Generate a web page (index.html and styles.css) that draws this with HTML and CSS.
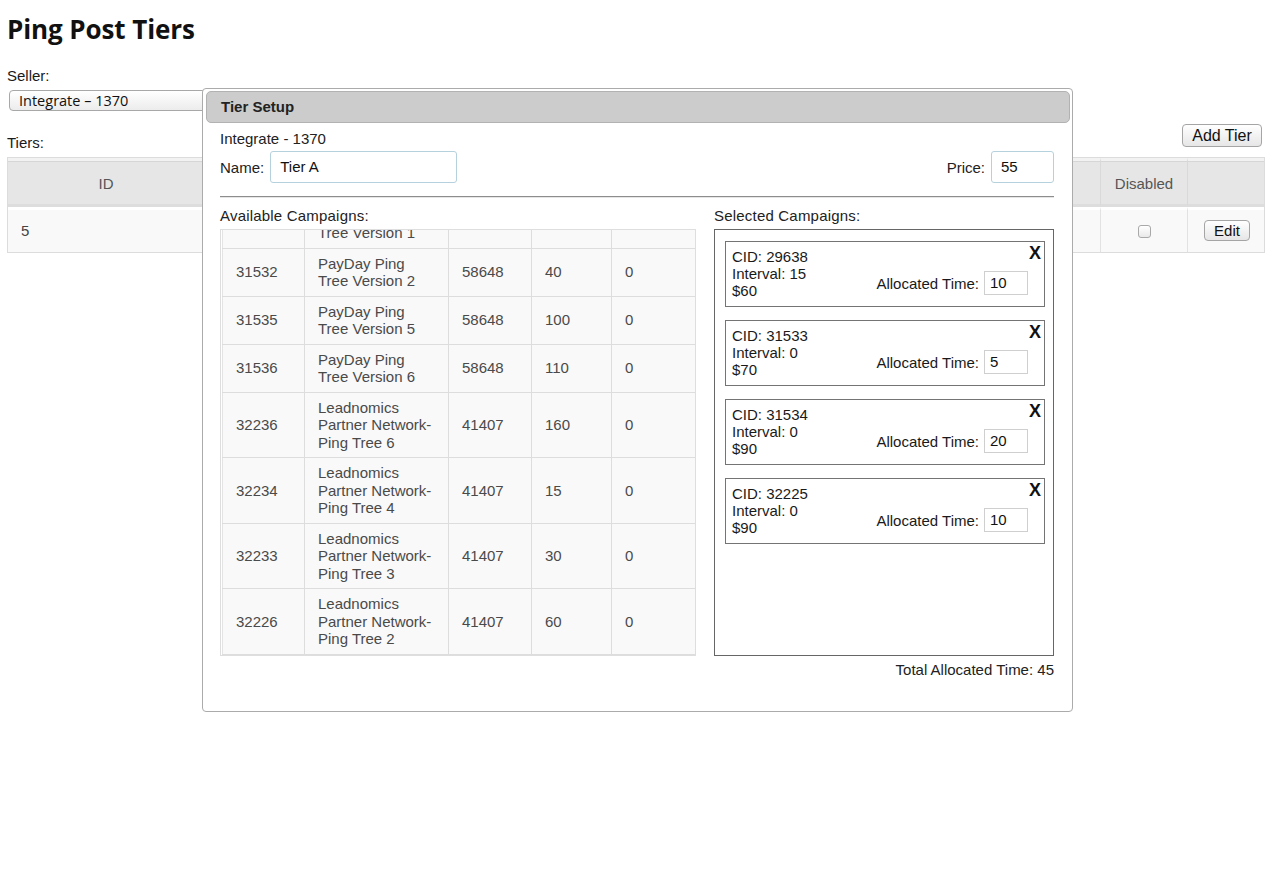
FILE: index.html
```html
<!DOCTYPE html>
<html>
<head>
<meta charset="utf-8">
<title>Ping Post Tiers</title>
<link rel="stylesheet" href="styles.css">
</head>
<body>
<div class="page">
  <h1 class="title">Ping Post Tiers</h1>
  <div class="field-label">Seller:</div>
  <div class="select">Integrate – 1370</div>
  <div class="tiers-head">
    <span class="tiers-label">Tiers:</span>
    <button class="mac-btn add-btn">Add Tier</button>
  </div>
  <table class="tiers">
    <thead>
      <tr>
        <th class="c-id">ID</th>
        <th class="c-name">Name</th>
        <th class="c-price">Price</th>
        <th class="c-dis">Disabled</th>
        <th class="c-act"></th>
      </tr>
    </thead>
    <tbody>
      <tr>
        <td class="c-id">5</td>
        <td>Tier A</td>
        <td>55</td>
        <td class="center"><span class="checkbox"></span></td>
        <td class="center"><button class="mac-btn edit-btn">Edit</button></td>
      </tr>
    </tbody>
  </table>
</div>

<div class="dialog">
  <div class="dialog-title">Tier Setup</div>
  <div class="dialog-body">
    <div class="seller-line">Integrate - 1370</div>
    <div class="name-row">
      <label class="inline-field">Name: <span class="text-input name-input">Tier A</span></label>
      <label class="inline-field">Price: <span class="text-input price-input">55</span></label>
    </div>
    <div class="divider"></div>
    <div class="columns">
      <div class="col-left">
        <div class="col-label">Available Campaigns:</div>
        <div class="avail-wrap">
          <table class="avail">
            <colgroup><col class="w1"><col class="w2"><col class="w3"><col class="w4"><col></colgroup>
            <tbody>
              <tr class="partial"><td></td><td class="nm">Tree Version 1</td><td></td><td></td><td></td></tr>
              <tr><td>31532</td><td class="nm">PayDay Ping<br>Tree Version 2</td><td>58648</td><td>40</td><td>0</td></tr>
              <tr><td>31535</td><td class="nm">PayDay Ping<br>Tree Version 5</td><td>58648</td><td>100</td><td>0</td></tr>
              <tr><td>31536</td><td class="nm">PayDay Ping<br>Tree Version 6</td><td>58648</td><td>110</td><td>0</td></tr>
              <tr><td>32236</td><td class="nm">Leadnomics<br>Partner Network-<br>Ping Tree 6</td><td>41407</td><td>160</td><td>0</td></tr>
              <tr><td>32234</td><td class="nm">Leadnomics<br>Partner Network-<br>Ping Tree 4</td><td>41407</td><td>15</td><td>0</td></tr>
              <tr><td>32233</td><td class="nm">Leadnomics<br>Partner Network-<br>Ping Tree 3</td><td>41407</td><td>30</td><td>0</td></tr>
              <tr><td>32226</td><td class="nm">Leadnomics<br>Partner Network-<br>Ping Tree 2</td><td>41407</td><td>60</td><td>0</td></tr>
            </tbody>
          </table>
        </div>
      </div>
      <div class="col-right">
        <div class="col-label">Selected Campaigns:</div>
        <div class="selected-box">
          <div class="card">
            <div class="card-info">CID: 29638<br>Interval: 15<br>$60</div>
            <div class="alloc">Allocated Time: <span class="small-input">10</span></div>
            <span class="close-x">X</span>
          </div>
          <div class="card">
            <div class="card-info">CID: 31533<br>Interval: 0<br>$70</div>
            <div class="alloc">Allocated Time: <span class="small-input">5</span></div>
            <span class="close-x">X</span>
          </div>
          <div class="card">
            <div class="card-info">CID: 31534<br>Interval: 0<br>$90</div>
            <div class="alloc">Allocated Time: <span class="small-input">20</span></div>
            <span class="close-x">X</span>
          </div>
          <div class="card">
            <div class="card-info">CID: 32225<br>Interval: 0<br>$90</div>
            <div class="alloc">Allocated Time: <span class="small-input">10</span></div>
            <span class="close-x">X</span>
          </div>
        </div>
        <div class="total">Total Allocated Time: 45</div>
      </div>
    </div>
  </div>
</div>
</body>
</html>
```

FILE: styles.css
```css
* { box-sizing: border-box; }

body {
  margin: 0;
  background: #fff;
  color: #1a1a1a;
  font-family: "Liberation Sans", Arial, Helvetica, sans-serif;
  font-size: 15px;
  line-height: 17px;
}

.page {
  padding: 0 15px 0 7px;
}

.title {
  margin: 0;
  padding-top: 12px;
  font-family: "Open Sans", "Noto Sans", sans-serif;
  font-weight: 700;
  font-size: 26px;
  line-height: 34px;
  letter-spacing: -0.1px;
  color: #111;
}

.field-label {
  margin-top: 21px;
}

.select {
  margin: 6px 0 0 2px;
  width: 200px;
  height: 21px;
  border: 1px solid #a8a8a8;
  border-radius: 4px;
  background: linear-gradient(#ffffff, #ececec);
  font-family: "Open Sans", "Noto Sans", sans-serif;
  font-size: 14.5px;
  line-height: 19px;
  padding-left: 9px;
  color: #111;
}

.tiers-head {
  display: flex;
  justify-content: space-between;
  align-items: flex-end;
  margin-top: 13px;
}

.tiers-label {
  margin-bottom: -4px;
}

.mac-btn {
  font-family: "Liberation Sans", Arial, sans-serif;
  color: #111;
  border: 1px solid #a5a5a5;
  border-radius: 4px;
  background: linear-gradient(#ffffff, #e6e6e6);
  padding: 0;
  cursor: pointer;
}

.add-btn {
  width: 80px;
  height: 23px;
  font-size: 16px;
  margin-right: 3px;
}

.tiers {
  margin-top: 10px;
  width: 1258px;
  border: 1px solid #dcdcdc;
  border-spacing: 0;
}

.tiers th {
  background: #e6e6e6;
  border-top: 3px solid #f2f2f2;
  box-shadow: inset 0 1px 0 #d6d6d6;
  border-bottom: 3px solid #dddddd;
  height: 49px;
  font-weight: 400;
  color: #555;
  text-align: center;
  border-left: 1px solid #d9d9d9;
  padding: 2px 0 0;
}

.tiers th:first-child,
.tiers td:first-child { border-left: none; }

.tiers td {
  background: #f9f9f9;
  border-top: 3px solid #fff;
  height: 45px;
  color: #444;
  border-left: 1px solid #e2e2e2;
  padding: 0 13px 2px;
}

.tiers .c-id { width: 196px; }
.tiers .c-dis { width: 87px; }
.tiers .c-act { width: 77px; }
.tiers .center { text-align: center; padding: 0 0 2px; }

.checkbox {
  display: inline-block;
  width: 13px;
  height: 13px;
  border: 1px solid #a9a9a9;
  border-radius: 3px;
  background: linear-gradient(#fff, #e9e9e9);
  vertical-align: middle;
}

.edit-btn {
  width: 46px;
  height: 21px;
  font-size: 15px;
  vertical-align: middle;
  margin-left: 2px;
}

/* Dialog overlay */
.dialog {
  position: absolute;
  left: 202px;
  top: 88px;
  width: 871px;
  height: 624px;
  background: #fff;
  border: 1px solid #ababab;
  border-radius: 4px;
  padding: 2px 2px 0 3px;
}

.dialog-title {
  height: 32px;
  background: #cccccc;
  border: 1px solid #b2b2b2;
  border-radius: 5px;
  font-weight: 700;
  font-size: 15px;
  line-height: 30px;
  padding-left: 14px;
  color: #222;
}

.dialog-body {
  padding: 0 16px 0 14px;
}

.seller-line {
  margin-top: 7px;
  color: #222;
}

.name-row {
  margin-top: 4px;
  display: flex;
  justify-content: space-between;
  align-items: center;
}

.inline-field {
  display: flex;
  align-items: center;
  gap: 6px;
  color: #222;
}

.text-input {
  display: block;
  height: 32px;
  border: 1px solid #b6d1de;
  border-radius: 3px;
  line-height: 30px;
  padding-left: 9px;
  font-size: 15px;
  color: #111;
  background: #fff;
}

.name-input { width: 187px; }
.price-input { width: 63px; }

.divider {
  margin-top: 13px;
  height: 2px;
  border-top: 1px solid #8d8d8d;
  border-bottom: 1px solid #e6e6e6;
}

.columns {
  display: flex;
  gap: 18px;
  margin-top: 10px;
}

.col-left { width: 476px; }
.col-right { width: 340px; }

.col-label {
  color: #222;
  margin-bottom: 5px;
  line-height: 16px;
  letter-spacing: 0.2px;
}

.avail-wrap {
  height: 427px;
  border: 1px solid #dedede;
  overflow: hidden;
}

.avail {
  width: 474px;
  margin: -13px 0 0 1px;
  border-collapse: collapse;
  table-layout: fixed;
}

.avail col.w1 { width: 82px; }
.avail col.w2 { width: 144px; }
.avail col.w3 { width: 83px; }
.avail col.w4 { width: 80px; }

.avail td {
  background: #f9f9f9;
  border: 1px solid #dddddd;
  padding: 6px 13px 6px 13px;
  line-height: 17.5px;
  color: #4a4a4a;
  vertical-align: middle;
  white-space: nowrap;
}

.avail tr td:first-child { border-left-color: #e4e4e4; }

.selected-box {
  height: 427px;
  border: 1px solid #666;
  padding: 11px 8px 0 10px;
}

.card {
  position: relative;
  display: flex;
  justify-content: space-between;
  align-items: flex-end;
  height: 66px;
  border: 1px solid #747474;
  padding: 6px 16px 0 6px;
  margin-bottom: 13px;
  color: #1a1a1a;
}

.card-info {
  align-self: flex-start;
  line-height: 17px;
}

.alloc {
  display: flex;
  align-items: center;
  gap: 5px;
  margin-bottom: 11px;
}

.small-input {
  display: block;
  width: 44px;
  height: 24px;
  border: 1px solid #cfcfcf;
  line-height: 22px;
  padding-left: 5px;
  font-size: 15px;
  color: #111;
}

.close-x {
  position: absolute;
  top: 2px;
  right: 3px;
  font-weight: 700;
  font-size: 18px;
  line-height: 18px;
  color: #111;
}

.total {
  margin-top: 5px;
  text-align: right;
  color: #222;
}
```
